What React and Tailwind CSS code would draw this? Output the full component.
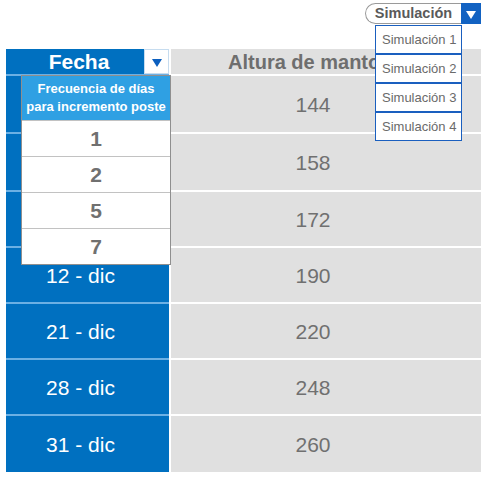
const rows = [
  { fecha: '', altura: '144', h: 'h-[56px]' },
  { fecha: '', altura: '158', h: 'h-[56px]' },
  { fecha: '', altura: '172', h: 'h-[54px]' },
  { fecha: '12 - dic', altura: '190', h: 'h-[54px]' },
  { fecha: '21 - dic', altura: '220', h: 'h-[54px]' },
  { fecha: '28 - dic', altura: '248', h: 'h-[54px]' },
  { fecha: '31 - dic', altura: '260', h: 'h-[56px]' },
];

const frecuencias = ['1', '2', '5', '7'];
const simulaciones = ['Simulación 1', 'Simulación 2', 'Simulación 3', 'Simulación 4'];

const Triangle = ({ color }) => (
  <svg width="10" height="8" viewBox="0 0 10 8">
    <polygon points="0,0 10,0 5,8" fill={color} />
  </svg>
);

export default function App() {
  return (
    <div
      className="relative w-[485px] h-[480px] bg-white overflow-hidden"
      style={{ fontFamily: '"Liberation Sans", Arial, sans-serif' }}
    >
      {/* selector de simulacion */}
      <div className="flex justify-end pt-[3px] pr-[4px]">
        <div className="flex h-[21px]">
          <div className="w-[96px] flex items-center justify-center rounded-l-full border border-r-0 border-[#9a9a9a] text-[14.5px] font-bold text-[#5a5a5a]">
            Simulación
          </div>
          <div className="w-[20px] bg-[#1262c2] flex items-center justify-center pt-[2px]">
            <Triangle color="#ffffff" />
          </div>
        </div>
      </div>

      {/* tabla */}
      <div className="mt-[25px] ml-[6px] w-[475px] flex gap-[2px]">
        <div className="w-[163px] flex flex-col gap-[2px] bg-[#6cb0e4]">
          <div className="h-[25px] flex">
            <div className="flex-1 bg-[#0070c0] flex items-center justify-center pl-[8px] text-[21px] font-bold text-white">
              Fecha
            </div>
            <div className="w-[25px] bg-white border border-[#c6dcef] flex items-center justify-center pt-[2px]">
              <Triangle color="#0b5fbf" />
            </div>
          </div>
          {rows.map((r, i) => (
            <div
              key={i}
              className={`${r.h} bg-[#0070c0] flex items-center justify-center pr-[14px] pt-[2px] text-[21px] text-white`}
            >
              {r.fecha}
            </div>
          ))}
        </div>
        <div className="flex-1 flex flex-col gap-[2px] bg-white">
          <div className="h-[25px] bg-[#e0e0e0] flex items-center pl-[57px] text-[20px] font-bold text-[#6e6e6e] whitespace-nowrap">
            Altura de manto
          </div>
          {rows.map((r, i) => (
            <div
              key={i}
              className={`${r.h} bg-[#e0e0e0] flex items-center justify-center pr-[26px] pt-[2px] text-[21px] text-[#707070]`}
            >
              {r.altura}
            </div>
          ))}
        </div>
      </div>

      {/* desplegable frecuencia */}
      <div className="absolute left-[21px] top-[75px] w-[150px] border border-[#8f8f8f] bg-white">
        <div className="h-[44px] bg-[#2fa0e3] flex flex-col items-center justify-center text-[13px] leading-[18px] font-bold text-white">
          <span>Frecuencia de días</span>
          <span>para incremento poste</span>
        </div>
        {frecuencias.map((f) => (
          <div
            key={f}
            className="h-[36px] border-t border-[#c2c2c2] flex items-center justify-center text-[21px] font-bold text-[#707070]"
          >
            {f}
          </div>
        ))}
      </div>

      {/* desplegable simulacion */}
      <div className="absolute left-[375px] top-[25px] w-[87px] bg-white">
        {simulaciones.map((s) => (
          <div
            key={s}
            className="h-[29px] border border-[#1a5fbf] flex items-center pl-[6px] pt-[1px] text-[13px] text-[#6a6a6a]"
          >
            {s}
          </div>
        ))}
      </div>
    </div>
  );
}
